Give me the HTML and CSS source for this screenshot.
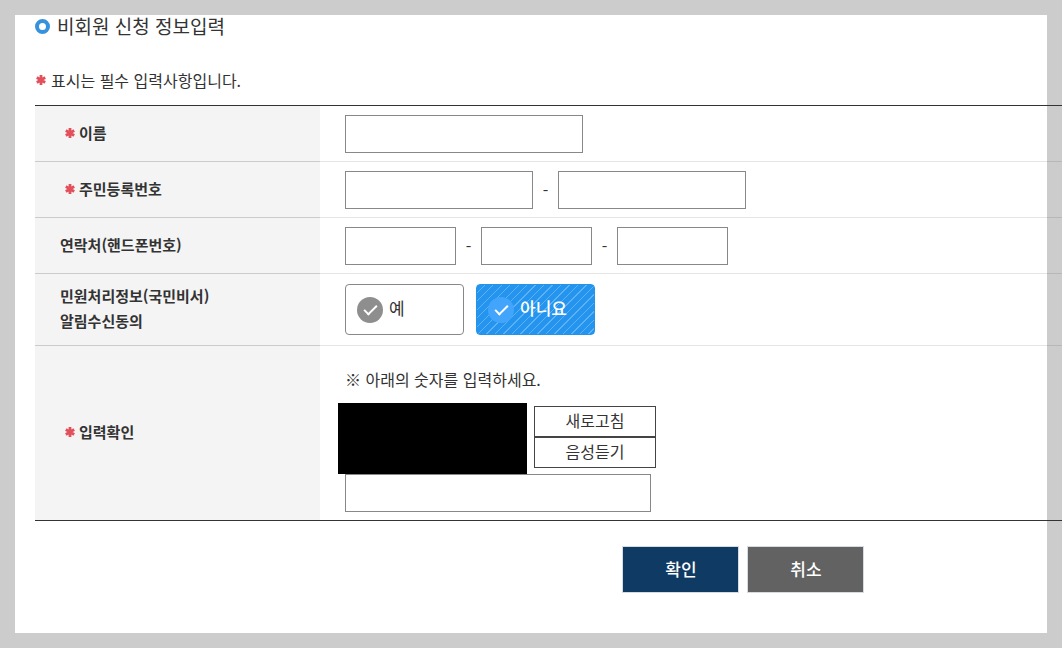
FILE: index.html
```
<!DOCTYPE html>
<html lang="ko">
<head>
  <meta charset="UTF-8">
  <meta name="viewport" content="width=device-width, initial-scale=1.0">
  <title>비회원 신청 정보입력</title>
  <link rel="stylesheet" href="styles.css">
</head>
<body>
  <svg class="sprite" aria-hidden="true">
    <symbol id="star" viewBox="0 0 12 12">
      <path d="M6 1v10M1.8 3.5l8.4 5M10.2 3.5l-8.4 5" fill="none" stroke="#e2505c" stroke-width="2.8"/>
    </symbol>
  </svg>

  <main class="panel">
    <h1 class="title">비회원 신청 정보입력</h1>
    <p class="notice"><svg class="star"><use href="#star"/></svg>표시는 필수 입력사항입니다.</p>

    <form>
      <table class="form-table">
        <tr>
          <th class="required" scope="row"><svg class="star"><use href="#star"/></svg><label for="name">이름</label></th>
          <td><input class="text name" type="text" id="name"></td>
        </tr>
        <tr>
          <th class="required" scope="row"><svg class="star"><use href="#star"/></svg><label for="jumin1">주민등록번호</label></th>
          <td>
            <div class="fields">
              <input class="text jumin" type="text" id="jumin1">
              <span class="dash">-</span>
              <input class="text jumin" type="password" aria-label="주민등록번호 뒷자리">
            </div>
          </td>
        </tr>
        <tr>
          <th scope="row"><label for="phone1">연락처(핸드폰번호)</label></th>
          <td>
            <div class="fields">
              <input class="text phone" type="text" id="phone1">
              <span class="dash">-</span>
              <input class="text phone" type="text" aria-label="연락처 가운데 자리">
              <span class="dash">-</span>
              <input class="text phone" type="text" aria-label="연락처 끝자리">
            </div>
          </td>
        </tr>
        <tr class="agree-row">
          <th scope="row">민원처리정보(국민비서)<br>알림수신동의</th>
          <td>
            <div class="choices">
              <label class="choice"><input type="radio" name="agree" value="Y"><span>예</span></label>
              <label class="choice"><input type="radio" name="agree" value="N" checked><span>아니요</span></label>
            </div>
          </td>
        </tr>
        <tr class="captcha-row">
          <th class="required" scope="row"><svg class="star"><use href="#star"/></svg><label for="captcha">입력확인</label></th>
          <td>
            <p class="hint">※ 아래의 숫자를 입력하세요.</p>
            <div class="captcha">
              <div class="captcha-image"></div>
              <div class="captcha-buttons">
                <button type="button">새로고침</button>
                <button type="button">음성듣기</button>
              </div>
            </div>
            <input class="text answer" type="text" id="captcha">
          </td>
        </tr>
      </table>

      <div class="actions">
        <button class="confirm" type="submit">확인</button>
        <button class="cancel" type="button">취소</button>
      </div>
    </form>
  </main>
</body>
</html>
```
FILE: styles.css
```
*, *::before {
  box-sizing: border-box;
}
body {
  margin: 0;
  padding: 15px;
  background-color: #ccc;
  color: #333;
  font-family: "Noto Sans CJK KR", sans-serif;
  font-size: 16px;
  line-height: 24px;
  overflow-x: hidden;
}
button, input {
  font-family: inherit;
  font-size: inherit;
  margin: 0;
}
p {
  margin: 0;
}
.sprite {
  display: none;
}
.panel {
  background: #fff;
  padding: 0 0 40px 20px;
}
.title {
  display: flex;
  align-items: center;
  gap: 7px;
  margin: 0;
  font-size: 19px;
  font-weight: normal;
  line-height: 22px;
}
.title::before {
  content: "";
  width: 15px;
  height: 15px;
  border: 4px solid #3792de;
  border-radius: 50%;
}
.notice {
  display: flex;
  align-items: center;
  padding: 31px 0 13px;
}
.star {
  width: 12px;
  height: 12px;
  flex: none;
}
.notice .star {
  margin-right: 4px;
}

/* 입력 표 */
.form-table {
  width: calc(100% + 15px);
  border-top: 1px solid #333;
  border-bottom: 1px solid #333;
  border-spacing: 0;
}
th, td {
  height: 56px;
  padding: 9px 0 8px 25px;
  border-bottom: 1px solid rgba(0, 0, 0, 0.1);
}
th {
  width: 285px;
  padding: 7px 0 10px 25px;
  background-color: #f4f4f4;
  border-bottom-color: #ccc;
  font-size: 15px;
  line-height: 25px;
  text-align: left;
}
th.required {
  padding-left: 29px;
}
th .star {
  margin-right: 3px;
}
.agree-row td {
  padding: 10px 0 10px 25px;
}
.captcha-row th, .captcha-row td {
  border-bottom: none;
}
.text {
  display: block;
  height: 38px;
  padding: 0 8px;
  border: 1px solid #888;
  background: #fff;
}
.name {
  width: 238px;
}
.jumin {
  width: 188px;
}
.phone {
  width: 111px;
}
.answer {
  width: 306px;
}
.fields {
  display: flex;
  align-items: center;
}
.dash {
  width: 25px;
  text-align: center;
}

/* 동의 선택 */
.choices {
  display: flex;
  gap: 12px;
}
.choice {
  display: flex;
  align-items: center;
  gap: 6px;
  width: 119px;
  height: 51px;
  padding-left: 11px;
  border: 1px solid #888;
  border-radius: 4px;
  font-size: 17px;
}
.choice span {
  padding-bottom: 4px;
}
.choice input {
  appearance: none;
  display: flex;
  justify-content: center;
  width: 26px;
  height: 26px;
  border-radius: 50%;
  background: #8e8e8e;
}
.choice input::before {
  content: "";
  width: 13px;
  height: 7px;
  margin-top: 8px;
  border: solid #fff;
  border-width: 0 0 2px 2px;
  transform: rotate(-45deg);
}
.choice:has(:checked) {
  border-color: #2494ea;
  background: repeating-linear-gradient(135deg, #2494ee 0 5px, #5bb2f6 5px 6px);
  color: #fff;
  font-weight: 500;
}
.choice input:checked {
  background: #42a5fb;
}

/* 자동입력 방지 */
.hint {
  padding: 12px 0;
}
.captcha {
  display: flex;
  gap: 7px;
  margin-left: -7px;
}
.captcha-image {
  width: 189px;
  height: 71px;
  background: #000;
}
.captcha-buttons {
  display: flex;
  flex-direction: column;
  width: 122px;
  padding-top: 3px;
}
.captcha-buttons button {
  height: 31px;
  padding: 0 0 3px;
  border: 1px solid #444;
  background: #fff;
  color: #333;
}

.actions {
  display: flex;
  justify-content: center;
  gap: 8px;
  padding: 25px 0 0 40%;
}
.actions button {
  width: 117px;
  height: 47px;
  padding: 0 0 3px;
  border: 1px solid #d5dbe1;
  color: #fff;
  font-size: 17px;
  font-weight: 500;
}
.confirm {
  background: #0e3a64;
}
.cancel {
  background: #626262;
}
```
